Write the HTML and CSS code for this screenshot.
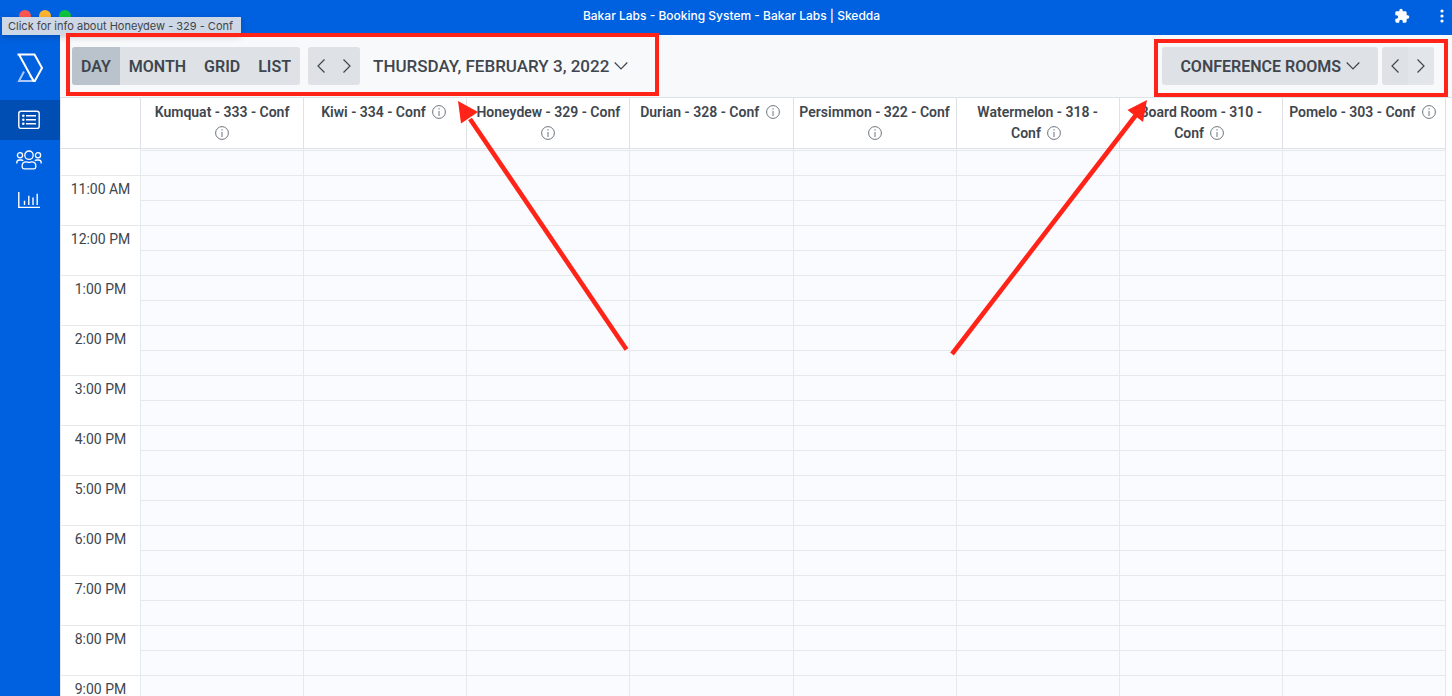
FILE: index.html
```html
<!DOCTYPE html>
<html lang="en">
  <head>
    <meta charset="UTF-8" />
    <title>Bakar Labs - Booking System - Bakar Labs | Skedda</title>
    <link rel="stylesheet" href="styles.css">
  </head>
  <body>
    <header class="titlebar">
      <div class="lights">
        <span class="light red"></span>
        <span class="light yellow"></span>
        <span class="light green"></span>
      </div>
      <div class="title">Bakar Labs - Booking System - Bakar Labs | Skedda</div>
      <div class="window-actions">
        <button aria-label="Extensions">
          <svg width="16" height="16" viewBox="0 0 24 24"><path fill="#fff" d="M20.500 11H19V7c0-1.100-.9-2-2-2h-4V3.500a2.500 2.500 0 0 0-5 0V5H4c-1.100 0-2 .9-2 2v3.800h1.500a2.700 2.700 0 0 1 0 5.400H2V20c0 1.100.9 2 2 2h3.800v-1.500a2.700 2.700 0 0 1 5.400 0V22H17c1.100 0 2-.9 2-2v-4h1.500a2.500 2.500 0 0 0 0-5z"/></svg>
        </button>
        <button aria-label="Menu">
          <svg width="4" height="14" viewBox="0 0 4 14" fill="#fff"><circle cx="2" cy="2" r="1.600"/><circle cx="2" cy="7" r="1.600"/><circle cx="2" cy="12" r="1.600"/></svg>
        </button>
      </div>
    </header>

    <div class="app">
      <nav class="sidebar">
        <a href="#" class="logo" aria-label="Skedda">
          <svg width="28" height="32" viewBox="0 0 28 32" fill="none" stroke="#fff" stroke-width="2">
            <path d="M8 19.500 3 29H18L14 23.500" stroke="#a9c8f5"/>
            <path d="M1.500 2.500H18.500L26 16 18.800 29H17.500L3 2.500"/>
          </svg>
        </a>
        <a href="#" class="nav-item active" aria-label="Bookings">
          <svg width="22" height="20" viewBox="0 0 22 20" fill="none" stroke="#fff" stroke-width="1.400">
            <rect x=".8" y="1.200" width="20.400" height="17.200" rx="2.200"/>
            <path d="M8 5.800h10M8 9.800h10M8 13.800h10"/>
            <g fill="#fff" stroke="none"><circle cx="5.300" cy="5.800" r="1.300"/><circle cx="5.300" cy="9.800" r="1.300"/><circle cx="5.300" cy="13.800" r="1.300"/></g>
          </svg>
        </a>
        <a href="#" class="nav-item" aria-label="Users">
          <svg width="26" height="20" viewBox="0 0 26 20" fill="none" stroke="#fff" stroke-width="1.300">
            <circle cx="13" cy="5.200" r="4.200"/>
            <circle cx="4" cy="5.200" r="2.600"/>
            <circle cx="22" cy="5.200" r="2.600"/>
            <path d="M.8 13.500v-.7C.8 11 1.800 10 3.500 10h1.700c.8 0 1.500.3 2 .8M25.200 13.500v-.7c0-1.800-1-2.800-2.700-2.800h-1.700c-.8 0-1.500.3-2 .8"/>
            <path d="M8 18.800c-1 0-1.800-.8-1.800-1.800v-1.200c0-2.300 1.700-4 4-4 1 0 1.500.6 2.800.6s1.800-.6 2.800-.6c2.300 0 4 1.700 4 4V17c0 1-.8 1.800-1.800 1.800z"/>
          </svg>
        </a>
        <a href="#" class="nav-item" aria-label="Reports">
          <svg width="22" height="18" viewBox="0 0 22 18" fill="none" stroke="#fff" stroke-width="1.400">
            <path d="M.8 1v15.400H22M6.500 14V9.800M10.800 14V4.800M15 14V6.600M19.200 14V2.800"/>
          </svg>
        </a>
      </nav>

      <main class="content">
        <div class="toolbar">
          <div class="btn-group">
            <button class="active">DAY</button>
            <button>MONTH</button>
            <button>GRID</button>
            <button>LIST</button>
          </div>
          <div class="btn-group arrows">
            <button aria-label="Previous day"><svg width="10" height="16" viewBox="0 0 10 16"><path d="M8.500 1.500 2 8l6.500 6.500"/></svg></button>
            <button aria-label="Next day"><svg width="10" height="16" viewBox="0 0 10 16"><path d="M1.500 1.500 8 8l-6.500 6.500"/></svg></button>
          </div>
          <button class="date">THURSDAY, FEBRUARY 3, 2022
            <svg width="14" height="10" viewBox="0 0 14 10"><path d="M.7 1.500 7 8l6.300-6.500"/></svg>
          </button>
          <button class="rooms">CONFERENCE ROOMS
            <svg width="14" height="10" viewBox="0 0 14 10"><path d="M.7 1.500 7 8l6.300-6.500"/></svg>
          </button>
          <div class="btn-group arrows">
            <button aria-label="Previous rooms"><svg width="10" height="16" viewBox="0 0 10 16"><path d="M8.500 1.500 2 8l6.500 6.500"/></svg></button>
            <button class="light-btn" aria-label="Next rooms"><svg width="10" height="16" viewBox="0 0 10 16"><path d="M1.500 1.500 8 8l-6.500 6.500"/></svg></button>
          </div>
        </div>

        <div class="schedule">
          <table>
            <thead>
              <tr id="rooms-row">
                <td class="corner"></td>
              </tr>
            </thead>
            <tbody id="schedule-body">
              <!-- Rows are built by the script -->
            </tbody>
          </table>
        </div>
      </main>
    </div>

    <div class="tooltip">Click for info about Honeydew - 329 - Conf</div>

    <!-- Callouts -->
    <div class="callout callout-date"></div>
    <div class="callout callout-rooms"></div>
    <svg class="pointer pointer-date" width="172" height="250" viewBox="0 0 172 250">
      <path d="M168.500 248.500 12 18" stroke="#ff2417" stroke-width="4.600"/>
      <path d="M0 0 20 11 3 22.500z" fill="#ff2417"/>
    </svg>
    <svg class="pointer pointer-rooms" width="198" height="256" viewBox="0 0 198 256">
      <path d="M2 254 186 15" stroke="#ff2417" stroke-width="4.600"/>
      <path d="M197 0 193 22 177.500 10z" fill="#ff2417"/>
    </svg>

    <script>
      const rooms = [
        "Kumquat - 333 - Conf",
        "Kiwi - 334 - Conf",
        "Honeydew - 329 - Conf",
        "Durian - 328 - Conf",
        "Persimmon - 322 - Conf",
        "Watermelon - 318 - Conf",
        "Board Room - 310 - Conf",
        "Pomelo - 303 - Conf",
      ];
      const hours = [
        "11:00 AM", "12:00 PM", "1:00 PM", "2:00 PM", "3:00 PM", "4:00 PM",
        "5:00 PM", "6:00 PM", "7:00 PM", "8:00 PM", "9:00 PM",
      ];

      const infoIcon = `<button class="info" aria-label="Room info"><svg width="14" height="14" viewBox="0 0 14 14"><circle cx="7" cy="7" r="6.400"/><path d="M7 6v5M7 3.200v1.400"/></svg></button>`;

      const roomsRow = document.getElementById("rooms-row");
      rooms.forEach((room) => {
        const th = document.createElement("th");
        th.scope = "col";
        th.innerHTML = `${room} ${infoIcon}`;
        roomsRow.appendChild(th);
      });

      const slots = "<td></td>".repeat(rooms.length);
      let rows = `
        <tr class="sliver"><th scope="row" rowspan="2"></th>${slots}</tr>
        <tr>${slots}</tr>
      `;
      hours.forEach((hour) => {
        rows += `
          <tr><th scope="row" rowspan="2">${hour}</th>${slots}</tr>
          <tr>${slots}</tr>
        `;
      });
      document.getElementById("schedule-body").innerHTML = rows;
    </script>
  </body>
</html>
```

FILE: styles.css
```css
* {
  box-sizing: border-box;
}
body {
  margin: 0;
  height: 100vh;
  overflow: hidden;
  position: relative;
  display: flex;
  flex-direction: column;
  font-family: Roboto, "Liberation Sans", sans-serif;
  color: #40464e;
}
button {
  border: 0;
  padding: 0;
  background: none;
  font: inherit;
  color: inherit;
  cursor: pointer;
}
svg {
  display: block;
}

/* window title bar */
.titlebar {
  flex: none;
  height: 35px;
  display: grid;
  grid-template-columns: 1fr auto 1fr;
  align-items: center;
  padding: 0 8px 4px 19px;
  background: #0061e0;
}
.lights {
  display: flex;
  gap: 8px;
}
.light {
  width: 12px;
  height: 12px;
  border-radius: 50%;
}
.red {
  background: #ff5550;
}
.yellow {
  background: #ffb42e;
}
.green {
  background: #0fc43c;
}
.title {
  font-family: Inter, sans-serif;
  font-size: 12px;
  font-weight: 500;
  color: #fff;
}
.window-actions {
  display: flex;
  align-items: center;
  justify-content: flex-end;
  gap: 30px;
}

.app {
  flex: 1;
  min-height: 0;
  display: flex;
}
.sidebar {
  flex: none;
  width: 60px;
  background: #0061e0;
}
.logo {
  height: 65px;
  display: flex;
  align-items: center;
  justify-content: center;
}
.nav-item {
  height: 40px;
  display: flex;
  align-items: center;
  justify-content: center;
  padding-right: 2px;
}
.nav-item.active {
  background: #004db3;
}

.content {
  flex: 1;
  min-width: 0;
  display: flex;
  flex-direction: column;
}
.toolbar {
  flex: none;
  display: flex;
  align-items: center;
  height: 62px;
  padding: 0 18px 0 12px;
  background: #f8f9fb;
  font-size: 16px;
  font-weight: 600;
}
.btn-group {
  display: flex;
  height: 38px;
  background: #dee2e6;
  border-radius: 3px;
  overflow: hidden;
}
.btn-group button {
  padding: 0 9px;
}
.btn-group .active {
  background: #bac3cb;
}
.arrows {
  margin-left: 8px;
}
.arrows button {
  padding: 0 8px;
}
.arrows .light-btn {
  background: #e2e6ea;
}
.toolbar path {
  fill: none;
  stroke: #40464e;
  stroke-width: 1.2;
}
.date,
.rooms {
  display: flex;
  align-items: center;
  gap: 5px;
  height: 38px;
}
.date {
  margin-left: 13px;
  font-size: 17px;
  font-weight: 500;
}
.rooms {
  margin-left: auto;
  padding: 0 18px;
  background: #dee2e6;
  border-radius: 3px;
}
.rooms + .arrows {
  margin-left: 4px;
}

/* booking grid */
.schedule {
  flex: 1;
  min-height: 0;
  overflow: hidden;
  padding-right: 6px;
  border-top: 1px solid #dee2e6;
  background: #fff;
}
table {
  width: 100%;
  table-layout: fixed;
  border-collapse: separate;
  border-spacing: 0;
}
th,
td {
  padding: 0;
  border-right: 1px solid #e6e9ec;
  border-bottom: 1px solid #e6e9ec;
}
thead th,
.corner {
  height: 51px;
  border-color: #dee2e6;
}
thead th {
  padding: 4px 5px;
  vertical-align: top;
  font-size: 14px;
  font-weight: 600;
  line-height: 21px;
}
.corner {
  width: 81px;
}
.corner,
tbody th {
  border-left: 1px solid #e6e9ec;
}
.info {
  margin: 0 3px;
  vertical-align: -2px;
}
.info svg {
  fill: none;
  stroke: #6c757d;
}
tbody td {
  height: 25px;
  background: #fafbff;
}
.sliver td {
  height: 2px;
}
tbody th {
  padding-top: 3px;
  vertical-align: top;
  font-size: 14px;
  font-weight: 400;
  line-height: 21px;
}

.tooltip {
  position: absolute;
  top: 17px;
  left: 2px;
  padding: 0 8px 0 6px;
  font-family: Inter, sans-serif;
  font-size: 11px;
  line-height: 18px;
  color: #40444b;
  background: #cdd7e5;
  box-shadow: 0 2px 6px rgba(0, 0, 0, 0.2);
}

/* red callouts over the page */
.callout {
  position: absolute;
  border: 4px solid #ff2417;
}
.callout-date {
  top: 33px;
  left: 66px;
  width: 593px;
  height: 63px;
}
.callout-rooms {
  top: 39px;
  right: 4px;
  width: 294px;
  height: 58px;
}
.pointer {
  position: absolute;
}
.pointer-date {
  top: 101px;
  left: 458px;
}
.pointer-rooms {
  top: 100px;
  right: 304px;
}
```
